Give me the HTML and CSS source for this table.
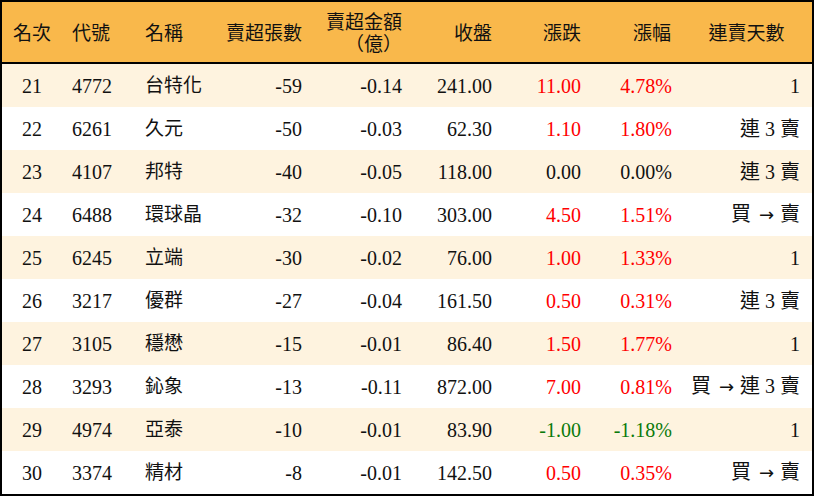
FILE: index.html
```html
<!DOCTYPE html>
<html lang="zh-Hant">
<head>
<meta charset="utf-8">
<title>賣超排行</title>
<link rel="stylesheet" href="styles.css">
</head>
<body>
<div class="frame">
<table class="rank">
  <colgroup>
    <col class="c1"><col class="c2"><col class="c3"><col class="c4"><col class="c5"><col class="c6"><col class="c7"><col class="c8"><col class="c9">
  </colgroup>
  <thead>
    <tr>
      <th class="center">名次</th>
      <th class="left">代號</th>
      <th class="left">名稱</th>
      <th class="right">賣超張數</th>
      <th class="right two"><span class="ln">賣超金額</span><span class="ln">（億）</span></th>
      <th class="right">收盤</th>
      <th class="right">漲跌</th>
      <th class="right">漲幅</th>
      <th class="center last">連賣天數</th>
    </tr>
  </thead>
  <tbody>
    <tr class="odd"><td class="center">21</td><td class="left">4772</td><td class="left name">台特化</td><td class="right">-59</td><td class="right">-0.14</td><td class="right">241.00</td><td class="right up">11.00</td><td class="right up pct">4.78%</td><td class="right last">1</td></tr>
    <tr><td class="center">22</td><td class="left">6261</td><td class="left name">久元</td><td class="right">-50</td><td class="right">-0.03</td><td class="right">62.30</td><td class="right up">1.10</td><td class="right up pct">1.80%</td><td class="right last">連 3 賣</td></tr>
    <tr class="odd"><td class="center">23</td><td class="left">4107</td><td class="left name">邦特</td><td class="right">-40</td><td class="right">-0.05</td><td class="right">118.00</td><td class="right">0.00</td><td class="right pct">0.00%</td><td class="right last">連 3 賣</td></tr>
    <tr><td class="center">24</td><td class="left">6488</td><td class="left name">環球晶</td><td class="right">-32</td><td class="right">-0.10</td><td class="right">303.00</td><td class="right up">4.50</td><td class="right up pct">1.51%</td><td class="right last">買<span class="arrow">→</span>賣</td></tr>
    <tr class="odd"><td class="center">25</td><td class="left">6245</td><td class="left name">立端</td><td class="right">-30</td><td class="right">-0.02</td><td class="right">76.00</td><td class="right up">1.00</td><td class="right up pct">1.33%</td><td class="right last">1</td></tr>
    <tr><td class="center">26</td><td class="left">3217</td><td class="left name">優群</td><td class="right">-27</td><td class="right">-0.04</td><td class="right">161.50</td><td class="right up">0.50</td><td class="right up pct">0.31%</td><td class="right last">連 3 賣</td></tr>
    <tr class="odd"><td class="center">27</td><td class="left">3105</td><td class="left name">穩懋</td><td class="right">-15</td><td class="right">-0.01</td><td class="right">86.40</td><td class="right up">1.50</td><td class="right up pct">1.77%</td><td class="right last">1</td></tr>
    <tr><td class="center">28</td><td class="left">3293</td><td class="left name">鈊象</td><td class="right">-13</td><td class="right">-0.11</td><td class="right">872.00</td><td class="right up">7.00</td><td class="right up pct">0.81%</td><td class="right last">買<span class="arrow">→</span>連 3 賣</td></tr>
    <tr class="odd"><td class="center">29</td><td class="left">4974</td><td class="left name">亞泰</td><td class="right">-10</td><td class="right">-0.01</td><td class="right">83.90</td><td class="right down">-1.00</td><td class="right down pct">-1.18%</td><td class="right last">1</td></tr>
    <tr><td class="center">30</td><td class="left">3374</td><td class="left name">精材</td><td class="right">-8</td><td class="right">-0.01</td><td class="right">142.50</td><td class="right up">0.50</td><td class="right up pct">0.35%</td><td class="right last">買<span class="arrow">→</span>賣</td></tr>
  </tbody>
</table>
</div>
</body>
</html>
```
FILE: styles.css
```css
html, body {
  margin: 0;
  padding: 0;
  background: #ffffff;
}

.frame {
  width: 810px;
  height: 492px;
  border: 2px solid #000000;
  overflow: hidden;
}

.rank {
  width: 810px;
  border-collapse: collapse;
  table-layout: fixed;
  font-family: "Liberation Serif", "Noto Sans CJK TC", serif;
  font-size: 20px;
  color: #111111;
}

.c1 { width: 60px; }
.c2 { width: 73px; }
.c3 { width: 80px; }
.c4 { width: 97px; }
.c5 { width: 100px; }
.c6 { width: 90px; }
.c7 { width: 89px; }
.c8 { width: 90px; }
.c9 { width: 131px; }

.rank thead tr {
  background: #f9b84b;
  height: 60px;
}

.rank th {
  font-weight: normal;
  padding: 0;
  height: 60px;
  border-bottom: 2px solid #000000;
  font-family: "Noto Sans CJK TC", "Liberation Serif", serif;
  font-size: 19px;
  line-height: 22px;
  vertical-align: middle;
}

.rank th.two .ln {
  display: block;
  height: 22px;
  line-height: 22px;
}

.rank tbody tr {
  height: 43px;
  background: #ffffff;
}

.rank tbody tr.odd { background: #fef3df; }

.rank td {
  padding: 0;
  height: 43px;
  line-height: 24px;
  vertical-align: middle;
  white-space: nowrap;
}

.rank td.name {
  font-size: 19px;
}

.arrow {
  display: inline-block;
  font-family: "DejaVu Sans", sans-serif;
  font-size: 18px;
  margin: 0 6px 0 8px;
}

.center { text-align: center; }
.left { text-align: left; padding-left: 10px !important; }
.right { text-align: right; padding-right: 10px !important; }

.rank td.last { padding-right: 12px !important; }
.pct { padding-right: 9px !important; }

.up { color: #ff0000; }
.down { color: #0a7a0a; }
```
